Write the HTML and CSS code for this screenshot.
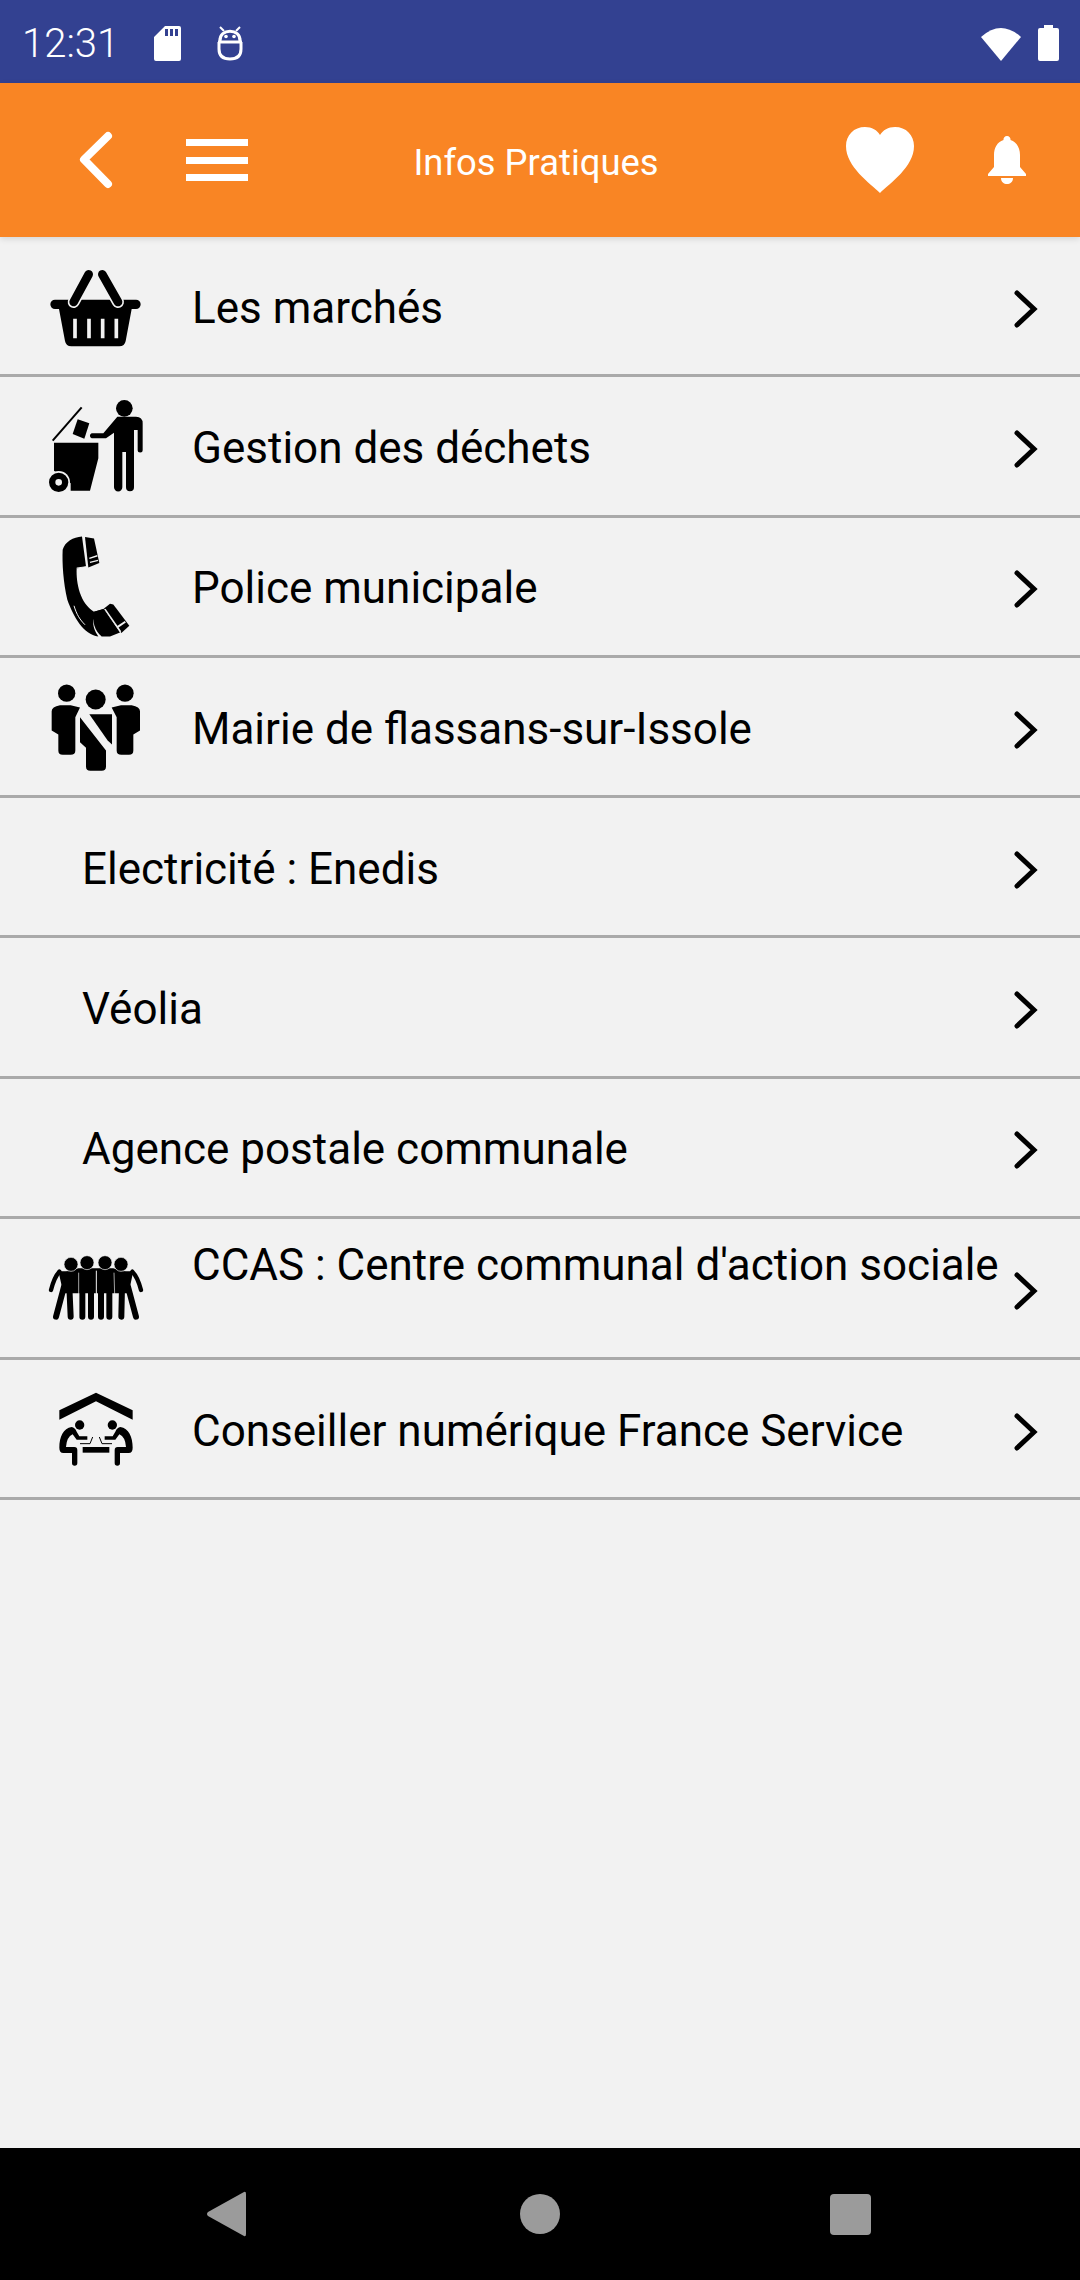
FILE: index.html
```html
<!DOCTYPE html>
<html lang="fr">
<head>
    <meta charset="UTF-8">
    <meta name="viewport" content="width=device-width, initial-scale=1.0">
    <title>Infos Pratiques</title>
    <link rel="stylesheet" href="styles.css">
</head>
<body>
    <div class="status-bar">
        <span class="clock">12:31</span>
        <svg class="sd-icon" viewBox="0 0 27 35"><path fill="#fff" fill-rule="evenodd" d="M11 0h14a2 2 0 0 1 2 2v31a2 2 0 0 1-2 2H2a2 2 0 0 1-2-2V11zM11 3v7h3V3zM16 3v7h3V3zM21 3v7h3V3z"/></svg>
        <svg class="bot-icon" viewBox="0 0 26 35"><g fill="none" stroke="#fff" stroke-width="3"><path d="M3 15C2 2 24 2 23 15"/><path d="M1 16H25"/><path d="M2 16V23Q2 33 13 33Q24 33 24 23V16"/><path d="M3 1L7 5M23 1L19 5" stroke-width="2"/></g><circle cx="9" cy="10.500" r="1.800" fill="#fff"/><circle cx="17" cy="10.500" r="1.800" fill="#fff"/></svg>
        <span class="spacer"></span>
        <svg class="wifi-icon" viewBox="0 0 40 35"><path fill="#fff" d="M0 11Q20 -7 40 11L20 35z"/></svg>
        <svg class="battery-icon" viewBox="0 0 21 36"><path fill="#fff" d="M6 0h9v3h4a2 2 0 0 1 2 2v29a2 2 0 0 1-2 2H2a2 2 0 0 1-2-2V5a2 2 0 0 1 2-2h4z"/></svg>
    </div>

    <header class="toolbar">
        <svg class="back-icon" viewBox="0 0 34 58"><path fill="none" stroke="#fff" stroke-width="8" stroke-linecap="round" stroke-linejoin="round" d="M29 5L5 28.500L29 53"/></svg>
        <div class="menu-icon"><span></span><span></span><span></span></div>
        <h1 class="title">Infos Pratiques</h1>
        <svg class="heart-icon" viewBox="0 0 68 66"><path fill="#fff" d="M34 66C24 56 0 40 0 19C0 8 8 0 19 0C26 0 31 3 34 8C37 3 42 0 49 0C60 0 68 8 68 19C68 40 44 56 34 66z"/></svg>
        <svg class="bell-icon" viewBox="0 0 38 48"><path fill="#fff" d="M19 0a3.500 3.500 0 0 1 3.500 4C29 6 32 12 32 19V31L38 38V40H0V38L6 31V19C6 12 9 6 15.500 4A3.500 3.500 0 0 1 19 0zM13 42H25C25 46 22 48 19 48S13 46 13 42z"/></svg>
    </header>

    <ul class="list">
        <li class="row">
            <svg class="row-icon" viewBox="0 -28 390 390">
                <path d="M75 148H318A14 14 0 0 1 318 176H305L287 272Q284 288 268 288H124Q108 288 105 272L87 176H75A14 14 0 0 1 75 148z"/>
                <g fill="none" stroke-linecap="round">
                    <path d="M176 72L131 155M217 72L264 155" stroke="#f2f2f2" stroke-width="36"/>
                    <path d="M176 72L131 155M217 72L264 155" stroke="#000" stroke-width="26"/>
                    <path d="M135 205V264M177 205V264M218 205V264M259 205V264" stroke="#f2f2f2" stroke-width="11" stroke-linecap="butt"/>
                </g>
            </svg>
            <span class="row-text">Les marchés</span>
            <svg class="chevron" viewBox="0 0 24 38"><path fill="none" stroke="#000" stroke-width="5" stroke-linecap="round" d="M3 3L20 19L3 35"/></svg>
        </li>
        <li class="row">
            <svg class="row-icon" viewBox="0 393 390 390">
                <circle cx="283" cy="475" r="25"/>
                <path d="M262 500H318Q338 500 338 520V600A7 7 0 0 1 323 600V540H312V712A12 12 0 0 1 288 712V606H277V712A12 12 0 0 1 252 712V548L228 565H185A8 8 0 0 1 185 550H220z"/>
                <path d="M68 572L155 472" stroke="#000" stroke-width="6"/>
                <path d="M143 508L178 520L163 566L128 552z"/>
                <path d="M72 578H205V625L180 722H122V700L72 662z"/>
                <circle cx="86" cy="697" r="34" fill="#f2f2f2"/>
                <circle cx="86" cy="697" r="19.500" fill="none" stroke="#000" stroke-width="19"/>
            </svg>
            <span class="row-text">Gestion des déchets</span>
            <svg class="chevron" viewBox="0 0 24 38"><path fill="none" stroke="#000" stroke-width="5" stroke-linecap="round" d="M3 3L20 19L3 35"/></svg>
        </li>
        <li class="row">
            <svg class="row-icon" viewBox="0 3.750 390 390">
                <path d="M98 90C105 65 130 52 156 50L168 140L140 146C138 190 150 250 192 276L224 266L190 300C188 320 195 335 205 350C160 345 130 290 112 240C100 190 96 130 98 90z"/>
                <path d="M165 52L192 56L208 130L175 143z"/>
                <path d="M192 276L222 268L270 338L240 350H215C195 335 185 305 192 276z"/>
                <path d="M240 252L250 254L298 318L274 340L222 266z"/>
                <g fill="none" stroke="#f2f2f2">
                    <path d="M178 116L202 108M180 128L204 122" stroke-width="4"/>
                    <path d="M225 268L272 336" stroke-width="4"/>
                    <path d="M262 322L286 306" stroke-width="6"/>
                    <path d="M132 258C140 285 150 300 165 315" stroke-width="3"/>
                    <path d="M140 145L168 141" stroke-width="3"/>
                </g>
            </svg>
            <span class="row-text">Police municipale</span>
            <svg class="chevron" viewBox="0 0 24 38"><path fill="none" stroke="#000" stroke-width="5" stroke-linecap="round" d="M3 3L20 19L3 35"/></svg>
        </li>
        <li class="row">
            <svg class="row-icon" viewBox="0 424.500 390 390">
                <circle cx="110" cy="518" r="26"/>
                <circle cx="285" cy="518" r="26"/>
                <circle cx="197" cy="537" r="30"/>
                <path d="M65 572Q65 558 90 554H122L150 561L136 590V690Q136 703 122 703H98Q85 703 85 690V642L65 630z"/>
                <path d="M330 572Q330 558 305 554H273L245 561L260 590V690Q260 703 274 703H297Q310 703 310 690V642L330 630z"/>
                <path d="M178 581H246V672L233 660z"/>
                <path d="M150 590L228 690V738Q228 751 215 751H181Q168 751 168 738V682L150 665z"/>
            </svg>
            <span class="row-text">Mairie de flassans-sur-Issole</span>
            <svg class="chevron" viewBox="0 0 24 38"><path fill="none" stroke="#000" stroke-width="5" stroke-linecap="round" d="M3 3L20 19L3 35"/></svg>
        </li>
        <li class="row row-plain">
            <span class="row-text">Electricité : Enedis</span>
            <svg class="chevron" viewBox="0 0 24 38"><path fill="none" stroke="#000" stroke-width="5" stroke-linecap="round" d="M3 3L20 19L3 35"/></svg>
        </li>
        <li class="row row-plain">
            <span class="row-text">Véolia</span>
            <svg class="chevron" viewBox="0 0 24 38"><path fill="none" stroke="#000" stroke-width="5" stroke-linecap="round" d="M3 3L20 19L3 35"/></svg>
        </li>
        <li class="row row-plain">
            <span class="row-text">Agence postale communale</span>
            <svg class="chevron" viewBox="0 0 24 38"><path fill="none" stroke="#000" stroke-width="5" stroke-linecap="round" d="M3 3L20 19L3 35"/></svg>
        </li>
        <li class="row row-top">
            <svg class="row-icon" viewBox="0 -21 390 390">
                <path d="M85 122Q120 128 145 115H250Q275 128 310 122L296 190H100z"/>
                <g fill="none" stroke="#000" stroke-linecap="round" stroke-linejoin="round">
                    <path d="M88 125C74 140 68 160 63 180M307 125C322 140 328 160 333 180" stroke-width="13"/>
                    <path d="M102 170L78 260M118 170L122 260M157 170V260M183 170V260M213 170V260M238 170V260M276 170L274 260M294 170L318 260" stroke-width="18"/>
                </g>
                <path d="M199 122V262" stroke="#f2f2f2" stroke-width="3" fill="none"/>
                <path d="M146 128V262M252 128L256 262" stroke="#f2f2f2" stroke-width="2" fill="none"/>
                <g stroke="#f2f2f2" stroke-width="2">
                    <circle cx="123" cy="103" r="21"/>
                    <circle cx="171" cy="98" r="21"/>
                    <circle cx="225" cy="98" r="21"/>
                    <circle cx="273" cy="103" r="21"/>
                </g>
            </svg>
            <span class="row-text">CCAS : Centre communal d'action sociale</span>
            <svg class="chevron" viewBox="0 0 24 38"><path fill="none" stroke="#000" stroke-width="5" stroke-linecap="round" d="M3 3L20 19L3 35"/></svg>
        </li>
        <li class="row">
            <svg class="row-icon" viewBox="0 401 390 390">
                <path d="M198 487L308 540V568L198 513L88 568V540z"/>
                <rect x="158" y="650" width="80" height="17"/>
                <g>
                    <circle cx="149" cy="584" r="14"/>
                    <path d="M125 590Q135 592 140 604L148 618H172V628H140L128 612Q110 620 108 650H133Q142 650 142 660V698A8 8 0 0 1 126 698V668H100Q88 668 88 652C88 620 100 594 125 590z"/>
                    <path d="M188 620L180 640H150" fill="none" stroke="#000" stroke-width="3"/>
                </g>
                <g transform="matrix(-1 0 0 1 396 0)">
                    <circle cx="149" cy="584" r="14"/>
                    <path d="M125 590Q135 592 140 604L148 618H172V628H140L128 612Q110 620 108 650H133Q142 650 142 660V698A8 8 0 0 1 126 698V668H100Q88 668 88 652C88 620 100 594 125 590z"/>
                    <path d="M188 620L180 640H150" fill="none" stroke="#000" stroke-width="3"/>
                </g>
            </svg>
            <span class="row-text">Conseiller numérique France Service</span>
            <svg class="chevron" viewBox="0 0 24 38"><path fill="none" stroke="#000" stroke-width="5" stroke-linecap="round" d="M3 3L20 19L3 35"/></svg>
        </li>
    </ul>

    <nav class="nav-bar">
        <svg class="nav-back" viewBox="0 0 39 46"><path fill="#9b9b9b" d="M37 1Q39 0 39 3V43Q39 46 37 45L1 25Q-1 23 1 21z"/></svg>
        <span class="nav-home"></span>
        <span class="nav-recent"></span>
    </nav>
</body>
</html>
```

FILE: styles.css
```css
* {
    box-sizing: border-box;
}
html, body {
    margin: 0;
    padding: 0;
}
body {
    width: 1080px;
    height: 2280px;
    display: flex;
    flex-direction: column;
    background-color: #f2f2f2;
    font-family: Roboto, "Liberation Sans", sans-serif;
    overflow: hidden;
}
.status-bar {
    height: 83px;
    display: flex;
    align-items: center;
    padding: 3px 21px 0 22px;
    background-color: #334191;
    color: #fff;
}
.clock {
    font-size: 40px;
    font-weight: 300;
    width: 132px;
}
.sd-icon {
    width: 27px;
    height: 35px;
    margin-right: 36px;
}
.bot-icon {
    width: 26px;
    height: 35px;
}
.spacer {
    flex: 1;
}
.wifi-icon {
    width: 40px;
    height: 35px;
    margin-right: 17px;
}
.battery-icon {
    width: 21px;
    height: 36px;
}
.toolbar {
    height: 154px;
    display: flex;
    align-items: center;
    position: relative;
    background-color: #f98524;
    box-shadow: 0 2px 6px rgba(0, 0, 0, 0.12);
    color: #fff;
}
.back-icon {
    width: 34px;
    height: 58px;
    margin-left: 79px;
}
.menu-icon {
    width: 62px;
    height: 42px;
    margin-left: 73px;
    display: flex;
    flex-direction: column;
    justify-content: space-between;
}
.menu-icon span {
    height: 7px;
    background-color: #fff;
}
.title {
    position: absolute;
    left: 0;
    right: 0;
    margin: 0;
    padding: 5px 8px 0 0;
    text-align: center;
    font-size: 36.4px;
    font-weight: 400;
}
.heart-icon {
    width: 68px;
    height: 66px;
    margin-left: auto;
    margin-right: 74px;
}
.bell-icon {
    width: 38px;
    height: 48px;
    margin-right: 54px;
}
.list {
    list-style: none;
    margin: 0;
    padding: 0;
    flex: 1;
}
.row {
    height: 140.3px;
    display: flex;
    align-items: center;
    border-bottom: 3px solid #aaaaaa;
    padding: 6px 42px 0 0;
}
.row-icon {
    width: 130px;
    height: 130px;
    margin: 0 32px 6px 30px;
    flex-shrink: 0;
}
.row-plain {
    padding-left: 82px;
}
.row-top {
    height: 141px;
}
.row-top .row-text {
    align-self: flex-start;
    margin: 14px 0 0;
}
.row-text {
    font-size: 44px;
    color: #000;
    white-space: nowrap;
    margin-bottom: 2px;
}
.chevron {
    width: 24px;
    height: 38px;
    margin-left: auto;
    flex-shrink: 0;
}
.nav-bar {
    height: 132px;
    display: flex;
    align-items: center;
    background-color: #000;
}
.nav-back {
    width: 39px;
    height: 46px;
    margin-left: 207px;
}
.nav-home {
    width: 40px;
    height: 40px;
    margin-left: 274px;
    border-radius: 50%;
    background-color: #9b9b9b;
}
.nav-recent {
    width: 41px;
    height: 41px;
    margin-left: 270px;
    border-radius: 4px;
    background-color: #9b9b9b;
}
```
